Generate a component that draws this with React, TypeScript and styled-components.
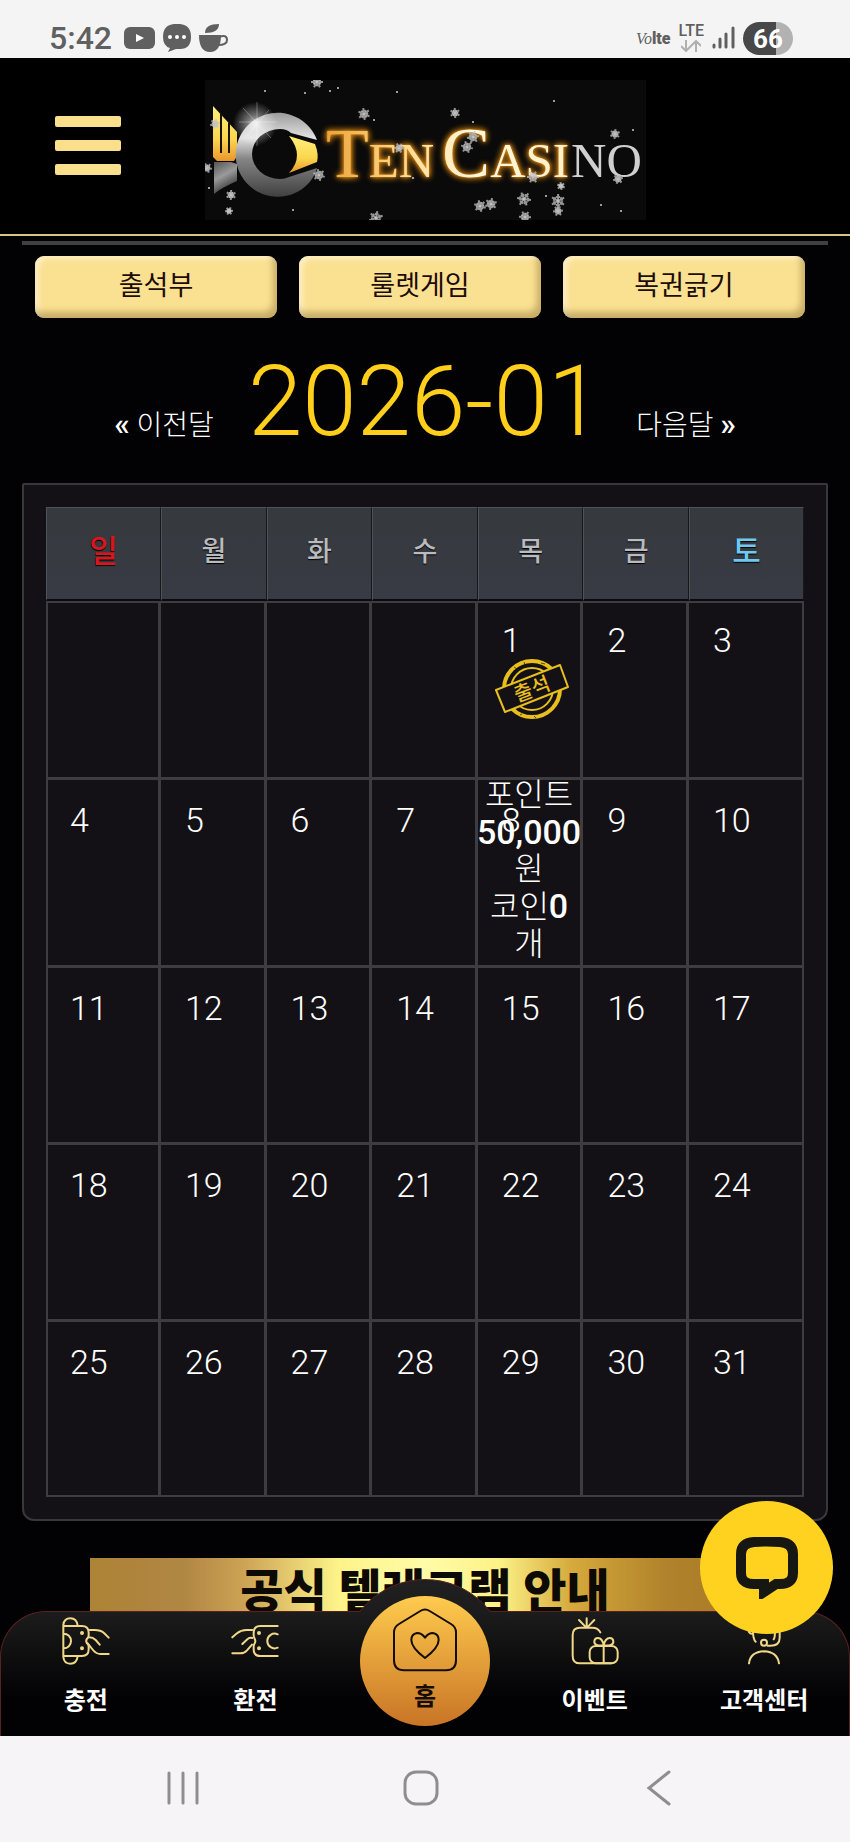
import { FunctionComponent, ReactNode } from 'react';
import styled, { createGlobalStyle } from 'styled-components';

const GlobalStyle = createGlobalStyle`
    * {
        box-sizing: border-box;
    }
    body {
        margin: 0;
        background: #020104;
        color: #fff;
        font-family: Roboto, 'Noto Sans CJK KR', sans-serif;
    }
    button {
        border: none;
        background: none;
        padding: 0;
        font: inherit;
        color: inherit;
        cursor: pointer;
    }
    a {
        color: inherit;
        text-decoration: none;
    }
    svg {
        display: block;
    }
`;

const Page = styled.div`
    display: flex;
    flex-direction: column;
    min-height: 100vh;
`;

/* status bar */
const StatusBar = styled.div`
    display: flex;
    justify-content: space-between;
    height: 58px;
    padding: 18px 57px 0 49px;
    background: #f4f4f4;
    color: #606060;
`;
const StatusGroup = styled.div`
    display: flex;
    align-items: center;
    gap: 8px;
    height: 40px;
`;
const Clock = styled.span`
    margin-right: 4px;
    font-size: 32px;
    font-weight: 500;
    line-height: 40px;
`;
const Volte = styled.span`
    font-family: Roboto, sans-serif;
    font-size: 16px;
    font-weight: 900;
    i {
        font-family: 'Liberation Serif', serif;
        font-weight: 400;
    }
`;
const Lte = styled.span`
    display: flex;
    flex-direction: column;
    align-items: center;
    gap: 2px;
    font-size: 16px;
    font-weight: 500;
    line-height: 14px;
`;
const Battery = styled.span`
    width: 50px;
    height: 33px;
    border-radius: 17px;
    background: linear-gradient(90deg, #484848 66%, #b2b2b2 66%);
    color: #fff;
    font-size: 26px;
    font-weight: 700;
    line-height: 34px;
    text-align: center;
`;

/* site header */
const Header = styled.header`
    display: grid;
    grid-template-columns: 1fr 441px 1fr;
    align-items: start;
    height: 178px;
    padding-top: 22px;
    border-bottom: 2px solid #d9c283;
    background: #000;
`;
const MenuButton = styled.button`
    display: flex;
    flex-direction: column;
    gap: 13px;
    width: 66px;
    margin: 36px 0 0 55px;
    span {
        height: 11px;
        border-radius: 2px;
        background: #fae08c;
    }
`;

const Main = styled.main`
    padding: 5px 22px 0;
`;
const Tabs = styled.nav`
    display: grid;
    grid-template-columns: repeat(3, 1fr);
    gap: 22px;
    padding: 11px 23px 0 13px;
    border-top: 4px solid #403f43;
`;
const TabButton = styled.button`
    height: 62px;
    padding-bottom: 3px;
    border-radius: 9px;
    background: #fae091;
    box-shadow:
        inset -4px -6px 6px rgba(120, 95, 40, 0.4),
        inset 4px 3px 5px rgba(255, 245, 215, 0.7);
    color: #1c0c08;
    font-size: 27px;
    line-height: 40px;
`;

const MonthBar = styled.div`
    display: flex;
    justify-content: center;
    align-items: baseline;
    gap: 34px;
    height: 165px;
    padding-top: 28px;
    h1 {
        margin: 0;
        color: #ffcf1c;
        font-size: 98px;
        font-weight: 300;
        line-height: 112px;
    }
`;
const MonthLink = styled.a`
    font-size: 28px;
    font-weight: 300;
    line-height: 32px;
    b {
        font-size: 32px;
        font-weight: 500;
    }
`;

const Panel = styled.section`
    padding: 22px;
    border: 2px solid #38373b;
    border-radius: 2px 2px 12px 12px;
    background: #131115;
`;
const Calendar = styled.table`
    width: 100%;
    border-spacing: 0;
    table-layout: fixed;
`;
const EdgeCol = styled.col`
    width: 115px;
`;
const HeadCell = styled.th<{ $tone?: string }>`
    height: 94px;
    padding: 0 0 4px;
    border: 1px solid #4d5356;
    border-right-color: #17181b;
    border-bottom: 2px solid #0b0b0d;
    background: linear-gradient(#363a3d, #383a45);
    color: ${({ $tone }) => $tone || '#b9bbbe'};
    font-size: ${({ $tone }) => ($tone ? '31px' : '27px')};
    font-weight: 500;
    line-height: 40px;
    text-shadow: 0 1px 1px #000;
`;
const DayCell = styled.td`
    position: relative;
    padding: 20px 0 0 24px;
    border-right: 3px solid #3d3c40;
    border-bottom: 3px solid #3d3c40;
    font-size: 34px;
    font-weight: 300;
    line-height: 40px;
    vertical-align: top;
    &:first-child {
        padding-left: 22px;
        border-left: 2px solid #3d3c40;
    }
    &:last-child {
        border-right-width: 2px;
    }
`;
const WeekRow = styled.tr<{ $tall?: boolean }>`
    ${DayCell} {
        height: ${({ $tall }) => ($tall ? '188px' : '177px')};
    }
    &:first-child ${DayCell} {
        height: 179px;
        padding-top: 17px;
        border-top: 2px solid #3d3c40;
    }
    &:last-child ${DayCell} {
        height: 175px;
        border-bottom-width: 2px;
    }
`;
const StampBox = styled.div`
    margin: -2px 0 0 -8px;
`;
/* spills over the week below, on top of its day number */
const Reward = styled.div`
    position: absolute;
    top: 100%;
    left: 0;
    right: 0;
    z-index: 1;
    display: flex;
    flex-direction: column;
    align-items: center;
    font-size: 32px;
    line-height: 37px;
    white-space: nowrap;
    b {
        font-size: 34px;
        font-weight: 500;
    }
`;

const Banner = styled.a`
    display: block;
    height: 96px;
    margin: 37px 68px 0;
    background: linear-gradient(
        90deg,
        #ad8336 0%,
        #b08644 14%,
        #cda355 23%,
        #fdf389 37%,
        #fffca8 50%,
        #fdf287 61%,
        #d5a93c 72%,
        #b0822b 86%,
        #a87a28 100%
    );
    color: #0d0905;
    font-size: 47px;
    font-weight: 900;
    line-height: 68px;
    text-align: center;
`;

/* bottom navigation */
const BottomNav = styled.nav`
    position: relative;
    display: grid;
    grid-template-columns: repeat(5, 1fr);
    height: 125px;
    margin-top: -43px;
    border: 1px solid #5c211f;
    border-bottom: none;
    border-radius: 46px 46px 0 0;
    background: linear-gradient(#1c1c1c, #020103 70%);
`;
const NavItem = styled.a`
    display: flex;
    flex-direction: column;
    align-items: center;
    gap: 19px;
    padding-top: 5px;
    font-size: 24px;
    font-weight: 700;
    line-height: 34px;
`;
const HomeSlot = styled.div`
    position: relative;
`;
const HomeRing = styled.div`
    position: absolute;
    bottom: -9px;
    left: 50%;
    width: 166px;
    height: 166px;
    margin-left: -83px;
    border: 1px solid #5c211f;
    border-radius: 50%;
    background: linear-gradient(#202020, #1a1a1a 30%, #050506 80%);
    clip-path: inset(0 0 133px 0);
`;
const HomeButton = styled.a`
    position: absolute;
    bottom: 10px;
    left: 50%;
    display: flex;
    flex-direction: column;
    align-items: center;
    gap: 8px;
    width: 130px;
    height: 130px;
    margin-left: -65px;
    padding-top: 12px;
    border-radius: 50%;
    background: linear-gradient(#ffcb4e, #c87425);
    color: #150c04;
    font-size: 24px;
    font-weight: 700;
    line-height: 34px;
`;
const ChatButton = styled.button`
    position: absolute;
    right: 16px;
    bottom: 102px;
    z-index: 2;
    display: grid;
    place-items: center;
    width: 133px;
    height: 133px;
    border-radius: 50%;
    background: #ffd21f;
`;

const SystemNav = styled.div`
    position: relative;
    z-index: 1;
    display: flex;
    justify-content: space-between;
    align-items: center;
    height: 106px;
    padding: 0 173px 2px 165px;
    background: #f6f4f7;
    color: #8e8d90;
`;

const flakes: [number, number, number][] = [
    [112, 2, 6], [159, 34, 6], [10, 44, 5], [2, 88, 5], [26, 115, 5], [24, 131, 4],
    [114, 95, 6], [171, 138, 7], [194, 68, 5], [250, 33, 5], [268, 57, 6], [262, 67, 6],
    [410, 54, 5], [328, 97, 6], [356, 106, 4], [413, 99, 5], [319, 119, 7], [353, 121, 7],
    [353, 131, 5], [275, 126, 6], [286, 124, 6], [320, 137, 6],
];
const dots: [number, number][] = [
    [60, 11], [100, 13], [125, 11], [133, 8], [192, 12], [169, 40], [4, 108], [88, 130],
    [208, 98], [268, 42], [349, 21], [341, 116], [396, 125], [416, 131], [428, 50],
];

const Wordmark = styled.text`
    font-family: 'Liberation Serif', serif;
    font-size: 49px;
`;
const GoldWordmark = styled(Wordmark)`
    filter: drop-shadow(0 0 3px #e08a10) drop-shadow(0 0 1px #e08a10);
`;

const Logo = () => (
    <svg width="441" height="140" viewBox="0 0 441 140" role="img" aria-label="Ten Casino">
        <defs>
            <linearGradient id="gold" x1="0" y1="0" x2="0" y2="1">
                <stop offset="0" stopColor="#fff07a" />
                <stop offset="0.6" stopColor="#fbd64e" />
                <stop offset="1" stopColor="#e9962c" />
            </linearGradient>
            <linearGradient id="steel" x1="0" y1="0" x2="0" y2="1">
                <stop offset="0" stopColor="#9b9b9b" />
                <stop offset="0.3" stopColor="#e2e2e2" />
                <stop offset="0.55" stopColor="#858585" />
                <stop offset="1" stopColor="#404040" />
            </linearGradient>
            <linearGradient id="fin" x1="0" y1="0" x2="0.4" y2="1">
                <stop offset="0" stopColor="#555" />
                <stop offset="0.5" stopColor="#9a9a9a" />
                <stop offset="1" stopColor="#333" />
            </linearGradient>
            <linearGradient id="word" x1="120" y1="0" x2="366" y2="0" gradientUnits="userSpaceOnUse">
                <stop offset="0" stopColor="#eaa33a" />
                <stop offset="0.3" stopColor="#ffd88a" />
                <stop offset="0.6" stopColor="#fff6dc" />
                <stop offset="1" stopColor="#fff0c8" />
            </linearGradient>
            <radialGradient id="flare">
                <stop offset="0" stopColor="#fff" />
                <stop offset="0.35" stopColor="#fff" stopOpacity="0.55" />
                <stop offset="1" stopColor="#fff" stopOpacity="0" />
            </radialGradient>
        </defs>
        <rect width="441" height="140" fill="#0a0a0a" />
        <path d="M9 82h17l6 2v17Q16 108 9 114z" fill="url(#fin)" />
        <path d="M8 26l24 26v24l-3 5H12l-4-4z" fill="url(#gold)" />
        <path d="M16 34v39M24 43v30" stroke="#1a1204" strokeWidth="2" />
        <path
            d="M112 60A42 42 0 1 0 110 94L112 88 84 97Q80 99 75 99A28 25 0 0 1 75 49Q82 49 86 53z"
            fill="url(#steel)"
        />
        <path d="M84 56l26 8q4 10 2 18L84 93q16-17 0-37z" fill="url(#gold)" />
        <circle cx="50" cy="44" r="22" fill="url(#flare)" opacity="0.8" />
        <path d="M52 22v44M34 42h38M38 28l28 30M64 30L42 56" stroke="#fff" strokeOpacity="0.3" />
        <GoldWordmark x="121" y="97" fill="url(#word)">
            <tspan fontSize="70">T</tspan>
            EN
            <tspan fontSize="32"> </tspan>
            <tspan fontSize="72">C</tspan>
            ASI
        </GoldWordmark>
        <Wordmark x="366" y="97" fill="#cfcfcf">
            NO
        </Wordmark>
        {flakes.map(([x, y, r], i) => (
            <g
                key={i}
                transform={`translate(${x} ${y}) rotate(${i * 23})`}
                stroke="#c4c4c4"
                strokeOpacity="0.75"
                strokeWidth="2"
            >
                {[0, 60, 120].map((a) => (
                    <path
                        key={a}
                        d={`M${-r} 0H${r}M${r - 3} -2v4M${3 - r} -2v4`}
                        transform={`rotate(${a})`}
                    />
                ))}
            </g>
        ))}
        {dots.map(([x, y]) => (
            <circle key={`${x}-${y}`} cx={x} cy={y} r="1" fill="#ccc" />
        ))}
    </svg>
);

const Stamp = () => (
    <svg width="76" height="62" viewBox="0 0 76 62" role="img" aria-label="출석">
        <g fill="none" stroke="#e8bf1c">
            <circle cx="38" cy="31" r="28" strokeWidth="4" />
            <circle cx="38" cy="31" r="21" strokeWidth="2" />
            <path d="M2 32L66 7l8 22L11 54z" fill="#131115" strokeWidth="2" strokeLinejoin="round" />
        </g>
        <path
            d="M20 9l3 2M30 4l1 3M47 5l4 1M58 48l-3-1M40 58l2 2M26 57l2-1"
            stroke="#131115"
            strokeOpacity="0.7"
        />
        <text
            x="38"
            y="38"
            transform="rotate(-21 38 31)"
            fill="#e8bf1c"
            fontFamily="'Noto Sans CJK KR', sans-serif"
            fontSize="20"
            fontWeight="500"
            textAnchor="middle"
        >
            출석
        </text>
    </svg>
);

const LineIcon: FunctionComponent<{ children: ReactNode }> = ({ children }) => (
    <svg
        width="48"
        height="48"
        viewBox="0 0 144 144"
        fill="none"
        stroke="#f0d888"
        strokeWidth="6"
        strokeLinecap="round"
        strokeLinejoin="round"
    >
        {children}
    </svg>
);

const DepositIcon = () => (
    <LineIcon>
        <path d="M4 24v96M4 24q2-20 21-20t22 22M4 120q2 20 21 20t22-22M5 50a22 22 0 0 1 0 44" />
        <path d="M6 27h54q20 0 20 20v8q0 6-5 10-5 7 0 14 5 4 5 10v8q0 20-20 20H6" />
        <path d="M83 39h15q18 0 28 9l14 14M81 61q12 0 20 8l12 14M77 79l16 20q10 12 22 12h25" />
        <circle cx="60" cy="48" r="3" fill="#f0d888" />
        <circle cx="60" cy="94" r="3" fill="#f0d888" />
    </LineIcon>
);
const WithdrawIcon = () => (
    <LineIcon>
        <path d="M140 27H88q-20 0-20 20v8q0 6 3 10 4 7 0 14-3 4-3 10v8q0 20 20 20h52" />
        <path d="M140 52a22 22 0 1 0 0 40M4 61l14-12q12-10 28-10h18M34 81l15-14q6-7 15-4M4 109h24q12 0 20-9l15-17" />
        <circle cx="84" cy="48" r="3" fill="#f0d888" />
        <circle cx="84" cy="94" r="3" fill="#f0d888" />
    </LineIcon>
);
const EventIcon = () => (
    <LineIcon>
        <path d="M88 46q-7-14-24-14H27Q5 32 5 54v62q0 23 22 23h94M47 4v26M24 9l19 20M70 9L51 29" />
        <rect x="56" y="87" width="84" height="52" rx="18" />
        <path d="M98 87v50M98 85q-28 2-28-10 0-12 11-12 13 0 17 22 5-22 18-22 11 0 11 12 0 12-29 10z" />
    </LineIcon>
);
const SupportIcon = () => (
    <LineIcon>
        <path d="M34 50q-9-2-9-14v-4q0-28 47-28t47 28v30q0 24-28 24h-8M39 42q0 25 8 32M105 42q0 20-4 25" />
        <circle cx="72" cy="77" r="9" />
        <path d="M27 139q4-34 45-36 40 2 45 36" />
    </LineIcon>
);
const HomeIcon = () => (
    <svg
        width="64"
        height="64"
        viewBox="0 0 192 192"
        fill="none"
        stroke="#150c04"
        strokeWidth="6"
        strokeLinejoin="round"
    >
        <path d="M82 9q14-9 28 0l64 39q15 9 15 25v84q0 30-30 30H33q-30 0-30-30V73q0-16 15-25z" />
        <path d="M96 150Q55 119 55 96q0-18 17-21 14 0 24 14 10-14 24-14 17 3 17 21 0 23-41 54z" />
    </svg>
);

const StatusIcons = () => (
    <>
        <svg width="31" height="24" viewBox="0 0 31 24" fill="#606060">
            <rect y="1" width="31" height="22" rx="6" />
            <path d="M12 8l8 4-8 4z" fill="#fff" />
        </svg>
        <svg width="28" height="28" viewBox="0 0 28 28" fill="#606060">
            <path d="M11 0h6q11 1 11 13 0 12-11 12h-4l-8 3 2-4Q0 22 0 13 0 1 11 0z" />
            <circle cx="7" cy="13" r="2" fill="#fff" />
            <circle cx="14" cy="13" r="2" fill="#fff" />
            <circle cx="21" cy="13" r="2" fill="#fff" />
        </svg>
        <svg width="30" height="28" viewBox="0 0 30 28" fill="#606060">
            <path d="M6 9Q6 0 20 0q0 9-14 9zM0 11h22q0 17-11 17T0 11z" />
            <path d="M20 13q8-3 8 3 0 5-9 5" fill="none" stroke="#606060" strokeWidth="2" />
        </svg>
    </>
);

const weekdays = ['일', '월', '화', '수', '목', '금', '토'];
const tones: Record<string, string> = { 일: '#dc141b', 토: '#6ec8f0' };
// January 2026 starts on a Thursday
const weeks = Array.from({ length: 5 }, (_, w) =>
    weekdays.map((_, d) => w * 7 + d - 3),
);

const App = () => (
    <>
        <GlobalStyle />
        <Page>
            <StatusBar>
                <StatusGroup>
                    <Clock>5:42</Clock>
                    <StatusIcons />
                </StatusGroup>
                <StatusGroup>
                    <Volte>
                        <i>Vo</i>lte
                    </Volte>
                    <Lte>
                        LTE
                        <svg width="20" height="12" viewBox="0 0 20 12" fill="none" stroke="#b0b0b0" strokeWidth="2">
                            <path d="M5 0v10M0 6l5 5 5-5M15 12V2M10 6l5-5 5 5" />
                        </svg>
                    </Lte>
                    <svg width="23" height="24" viewBox="0 0 23 24" stroke="#606060" strokeWidth="3" strokeLinecap="round">
                        <path d="M2 19v2M8 13v8M14 8v13M21 2v19" />
                    </svg>
                    <Battery>66</Battery>
                </StatusGroup>
            </StatusBar>

            <Header>
                <MenuButton type="button" aria-label="메뉴">
                    <span />
                    <span />
                    <span />
                </MenuButton>
                <Logo />
            </Header>

            <Main>
                <Tabs>
                    <TabButton type="button">출석부</TabButton>
                    <TabButton type="button">룰렛게임</TabButton>
                    <TabButton type="button">복권긁기</TabButton>
                </Tabs>
                <MonthBar>
                    <MonthLink href="#prev">
                        <b>«</b> 이전달
                    </MonthLink>
                    <h1>2026-01</h1>
                    <MonthLink href="#next">
                        다음달 <b>»</b>
                    </MonthLink>
                </MonthBar>

                <Panel>
                    <Calendar>
                        <colgroup>
                            <EdgeCol />
                            <col span={5} />
                            <EdgeCol />
                        </colgroup>
                        <thead>
                            <tr>
                                {weekdays.map((name) => (
                                    <HeadCell key={name} scope="col" $tone={tones[name]}>
                                        {name}
                                    </HeadCell>
                                ))}
                            </tr>
                        </thead>
                        <tbody>
                            {weeks.map((days, w) => (
                                <WeekRow key={w} $tall={w === 1}>
                                    {days.map((day) => (
                                        <DayCell key={day}>
                                            {day > 0 && day}
                                            {day === 1 && (
                                                <>
                                                    <StampBox>
                                                        <Stamp />
                                                    </StampBox>
                                                    <Reward>
                                                        <span>포인트</span>
                                                        <b>50,000</b>
                                                        <span>원</span>
                                                        <span>
                                                            코인<b>0</b>
                                                        </span>
                                                        <span>개</span>
                                                    </Reward>
                                                </>
                                            )}
                                        </DayCell>
                                    ))}
                                </WeekRow>
                            ))}
                        </tbody>
                    </Calendar>
                </Panel>

                <Banner href="#telegram">공식 텔레그램 안내</Banner>
            </Main>

            <BottomNav>
                <NavItem href="#deposit">
                    <DepositIcon />
                    충전
                </NavItem>
                <NavItem href="#withdraw">
                    <WithdrawIcon />
                    환전
                </NavItem>
                <HomeSlot>
                    <HomeRing />
                    <HomeButton href="#home">
                        <HomeIcon />
                        홈
                    </HomeButton>
                </HomeSlot>
                <NavItem href="#event">
                    <EventIcon />
                    이벤트
                </NavItem>
                <NavItem href="#support">
                    <SupportIcon />
                    고객센터
                </NavItem>
                <ChatButton type="button" aria-label="채팅 상담">
                    <svg width="62" height="62" viewBox="0 0 62 62" fill="none" stroke="#161612" strokeWidth="10">
                        <path d="M28 47H18Q5 47 5 36V17Q5 6 18 5q13-1 26 0 13 1 13 12v19q0 11-13 11h-4L28 55z" />
                    </svg>
                </ChatButton>
            </BottomNav>

            <SystemNav>
                <svg width="36" height="36" viewBox="0 0 36 36" stroke="currentColor" strokeWidth="3" strokeLinecap="round">
                    <path d="M4 3v30M18 3v30M32 3v30" />
                </svg>
                <svg width="36" height="36" viewBox="0 0 36 36" fill="none" stroke="currentColor" strokeWidth="3">
                    <rect x="2" y="2" width="32" height="32" rx="11" />
                </svg>
                <svg width="36" height="36" viewBox="0 0 36 36" fill="none" stroke="currentColor" strokeWidth="3" strokeLinecap="round">
                    <path d="M28 2L8 18l20 16" />
                </svg>
            </SystemNav>
        </Page>
    </>
);

export default App;
